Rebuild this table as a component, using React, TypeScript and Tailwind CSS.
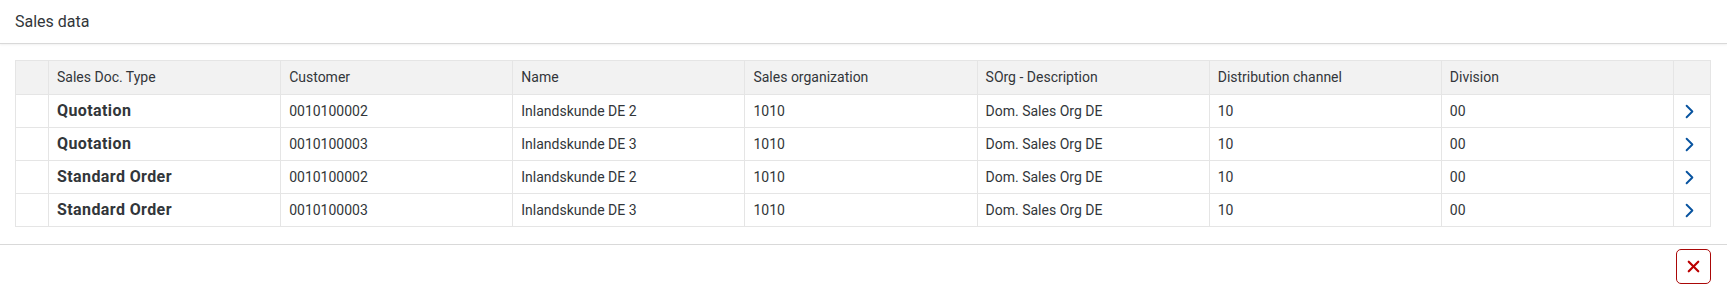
import { ChevronRight, X } from 'lucide-react';

interface SalesRow {
  docType: string;
  customer: string;
  name: string;
  salesOrg: string;
  orgDescription: string;
  channel: string;
  division: string;
}

const COLUMNS = [
  'Sales Doc. Type',
  'Customer',
  'Name',
  'Sales organization',
  'SOrg - Description',
  'Distribution channel',
  'Division',
];

const ROWS: SalesRow[] = [
  { docType: 'Quotation', customer: '0010100002', name: 'Inlandskunde DE 2', salesOrg: '1010', orgDescription: 'Dom. Sales Org DE', channel: '10', division: '00' },
  { docType: 'Quotation', customer: '0010100003', name: 'Inlandskunde DE 3', salesOrg: '1010', orgDescription: 'Dom. Sales Org DE', channel: '10', division: '00' },
  { docType: 'Standard Order', customer: '0010100002', name: 'Inlandskunde DE 2', salesOrg: '1010', orgDescription: 'Dom. Sales Org DE', channel: '10', division: '00' },
  { docType: 'Standard Order', customer: '0010100003', name: 'Inlandskunde DE 3', salesOrg: '1010', orgDescription: 'Dom. Sales Org DE', channel: '10', division: '00' },
];

const gridCols = 'grid grid-cols-[33px_repeat(7,minmax(0,1fr))_36px]';

const App = () => {
  return (
    <div
      className="w-[1727px] h-[288px] bg-white text-[#32363a] flex flex-col"
      style={{ fontFamily: 'Roboto, "Liberation Sans", sans-serif' }}
    >
      {/* Dialog header */}
      <div className="h-[44px] shrink-0 flex items-center pl-[15px] border-b border-[#d9d9d9] shadow-[0_1px_2px_rgba(0,0,0,0.06)]">
        <h2 className="text-[16px] font-normal leading-none">Sales data</h2>
      </div>

      {/* Table */}
      <div className="flex-1 pt-4 pl-[15px] pr-4">
        <div className="border border-[#e5e5e5] border-b-0">
          <div className={`${gridCols} h-[34px] bg-[#f2f2f2] border-b border-[#e5e5e5]`}>
            <div className="border-r border-[#e5e5e5]" />
            {COLUMNS.map((col) => (
              <div key={col} className="flex items-center pl-2 text-[14px] border-r border-[#e5e5e5] truncate">
                {col}
              </div>
            ))}
            <div />
          </div>

          {ROWS.map((row, i) => (
            <div key={i} className={`${gridCols} h-[33px] border-b border-[#e5e5e5]`}>
              <div className="border-r border-[#e5e5e5]" />
              <div className="flex items-center pl-2 text-[16px] font-bold tracking-[0.4px] border-r border-[#e5e5e5]">
                {row.docType}
              </div>
              {[row.customer, row.name, row.salesOrg, row.orgDescription, row.channel, row.division].map((value, j) => (
                <div key={j} className="flex items-center pl-2 text-[14px] border-r border-[#e5e5e5]">
                  {value}
                </div>
              ))}
              <div className="flex items-center justify-center">
                <ChevronRight size={23} strokeWidth={2} className="text-[#0854a0] -ml-1" />
              </div>
            </div>
          ))}
        </div>
      </div>

      {/* Footer */}
      <div className="h-[44px] shrink-0 border-t border-[#d9d9d9] flex items-center justify-end pr-4">
        <button className="w-[35px] h-[35px] rounded-[5px] border border-[#aa0808] bg-white flex items-center justify-center">
          <X size={19} strokeWidth={2.75} className="text-[#bb0000]" />
        </button>
      </div>
    </div>
  );
};

export default App;
